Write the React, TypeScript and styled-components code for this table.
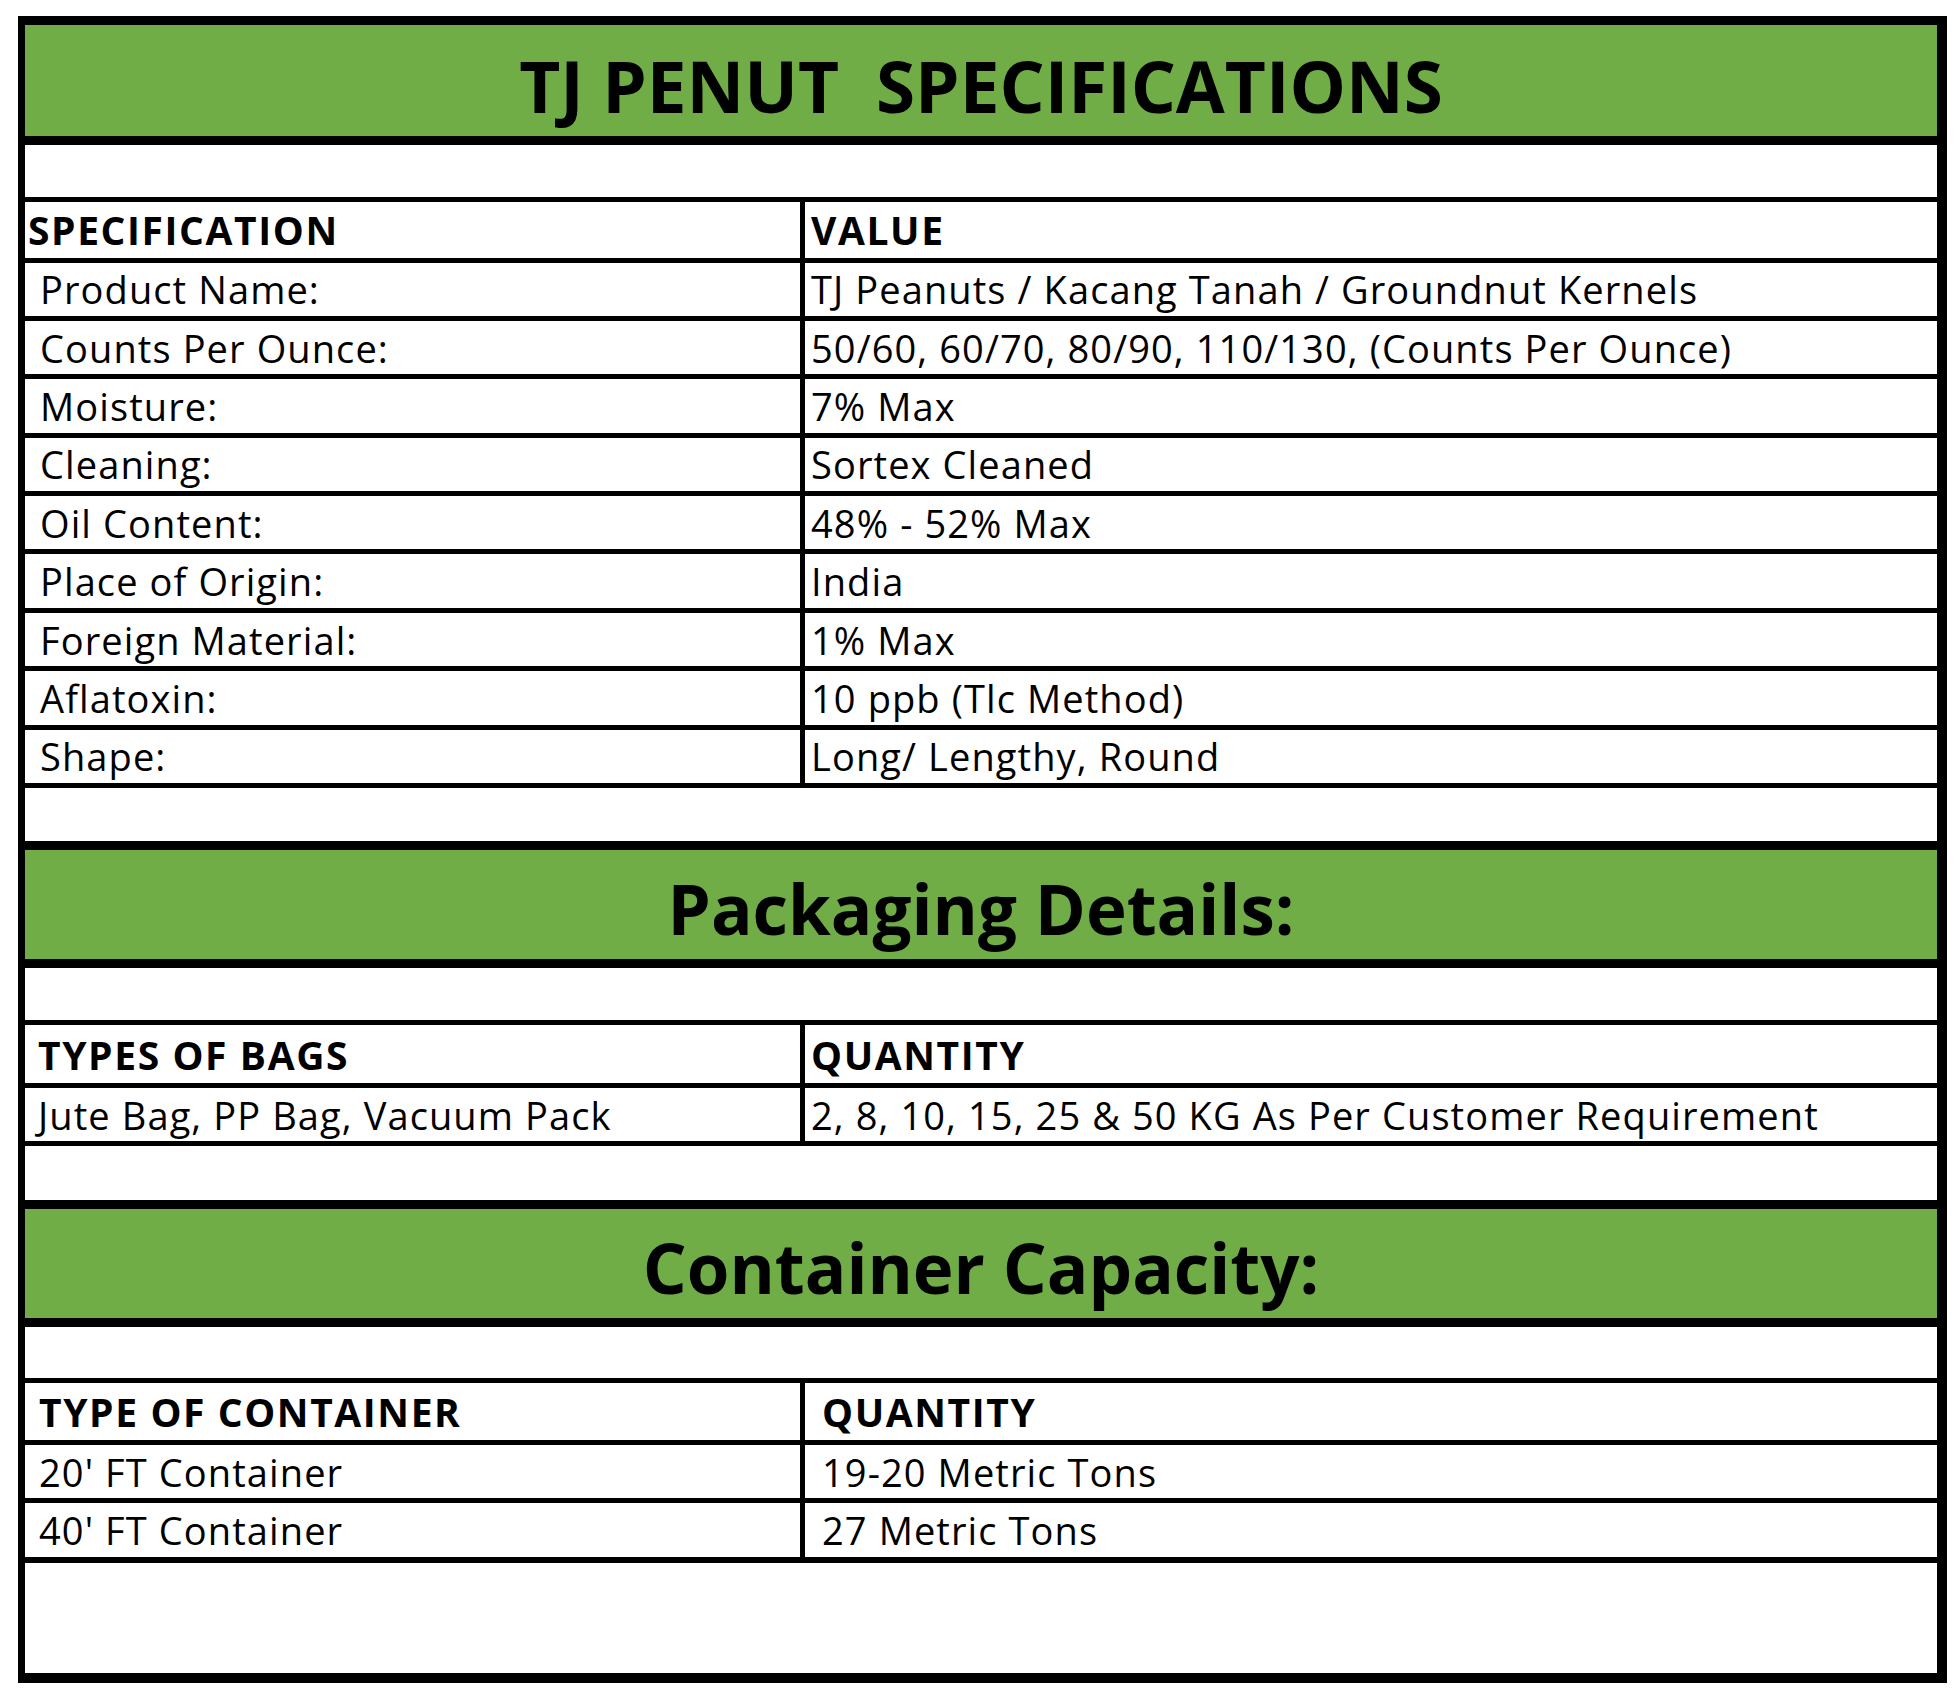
import React from "react"
import styled, { createGlobalStyle } from "styled-components"

const GREEN = "#70ad47"

const GlobalStyle = createGlobalStyle`
  html, body {
    margin: 0;
    padding: 0;
    background: #fff;
  }
  body {
    font-family: "Open Sans", "Noto Sans", sans-serif;
    color: #000;
  }
`

const S = {
  Sheet: styled.div`
    box-sizing: border-box;
    margin: 16px 0 0 18px;
    width: 1929px;
    height: 1667px;
    border-style: solid;
    border-color: #000;
    border-width: 9px 10px 10px 7px;
    display: flex;
    flex-direction: column;
    background: #fff;
  `,

  Banner: styled.div<{ $h: number; $shift: number }>`
    box-sizing: content-box;
    height: ${(p) => p.$h}px;
    background: ${GREEN};
    border-bottom: 9px solid #000;
    display: flex;
    align-items: center;
    justify-content: center;
    padding-top: ${(p) => p.$shift}px;
  `,

  BannerText: styled.h1<{ $size: number }>`
    margin: 0;
    font-size: ${(p) => p.$size}px;
    font-weight: 700;
    line-height: 1;
    white-space: pre;
  `,

  Blank: styled.div<{ $h: number; $thick?: boolean }>`
    box-sizing: content-box;
    height: ${(p) => p.$h}px;
    border-bottom: ${(p) => (p.$thick ? 9 : 5)}px solid #000;
  `,

  Filler: styled.div`
    flex: 1;
  `,

  Row: styled.div<{ $h: number; $line?: number }>`
    box-sizing: content-box;
    display: grid;
    grid-template-columns: 780px 1fr;
    height: ${(p) => p.$h}px;
    border-bottom: ${(p) => p.$line ?? 5}px solid #000;
  `,

  Cell: styled.div<{ $pad: number; $bold?: boolean }>`
    display: flex;
    align-items: center;
    padding-left: ${(p) => p.$pad}px;
    font-size: ${(p) => (p.$bold ? 39 : 38)}px;
    font-weight: ${(p) => (p.$bold ? 700 : 400)};
    letter-spacing: ${(p) => (p.$bold ? 1.6 : 1.1)}px;
    white-space: nowrap;
    overflow: hidden;
    &:first-child {
      border-right: 5px solid #000;
    }
  `,
}

const specs: [string, string][] = [
  ["Product Name:", "TJ Peanuts / Kacang Tanah / Groundnut Kernels"],
  ["Counts Per Ounce:", "50/60, 60/70, 80/90, 110/130, (Counts Per Ounce)"],
  ["Moisture:", "7% Max"],
  ["Cleaning:", "Sortex Cleaned"],
  ["Oil Content:", "48% - 52% Max"],
  ["Place of Origin:", "India"],
  ["Foreign Material:", "1% Max"],
  ["Aflatoxin:", "10 ppb (Tlc Method)"],
  ["Shape:", "Long/ Lengthy, Round"],
]

export default function App() {
  return (
    <>
      <GlobalStyle />
      <S.Sheet>
        <S.Banner $h={101} $shift={10}>
          <S.BannerText $size={71}>{"TJ PENUT  SPECIFICATIONS"}</S.BannerText>
        </S.Banner>
        <S.Blank $h={52} />

        <S.Row $h={55.5}>
          <S.Cell $pad={3} $bold>SPECIFICATION</S.Cell>
          <S.Cell $pad={6} $bold>VALUE</S.Cell>
        </S.Row>
        {specs.map(([label, value]) => (
          <S.Row key={label} $h={53.4}>
            <S.Cell $pad={15}>{label}</S.Cell>
            <S.Cell $pad={6}>{value}</S.Cell>
          </S.Row>
        ))}
        <S.Blank $h={53} $thick />

        <S.Banner $h={101} $shift={8}>
          <S.BannerText $size={69}>Packaging Details:</S.BannerText>
        </S.Banner>
        <S.Blank $h={52} />

        <S.Row $h={58}>
          <S.Cell $pad={13} $bold>TYPES OF BAGS</S.Cell>
          <S.Cell $pad={6} $bold>QUANTITY</S.Cell>
        </S.Row>
        <S.Row $h={53}>
          <S.Cell $pad={13}>Jute Bag, PP Bag, Vacuum Pack</S.Cell>
          <S.Cell $pad={6}>2, 8, 10, 15, 25 &amp; 50 KG As Per Customer Requirement</S.Cell>
        </S.Row>
        <S.Blank $h={54} $thick />

        <S.Banner $h={101} $shift={8}>
          <S.BannerText $size={69}>Container Capacity:</S.BannerText>
        </S.Banner>
        <S.Blank $h={51} />

        <S.Row $h={57}>
          <S.Cell $pad={14} $bold>TYPE OF CONTAINER</S.Cell>
          <S.Cell $pad={17} $bold>QUANTITY</S.Cell>
        </S.Row>
        <S.Row $h={53}>
          <S.Cell $pad={14}>20' FT Container</S.Cell>
          <S.Cell $pad={17}>19-20 Metric Tons</S.Cell>
        </S.Row>
        <S.Row $h={54} $line={6}>
          <S.Cell $pad={14}>40' FT Container</S.Cell>
          <S.Cell $pad={17}>27 Metric Tons</S.Cell>
        </S.Row>
        <S.Filler />
      </S.Sheet>
    </>
  )
}
